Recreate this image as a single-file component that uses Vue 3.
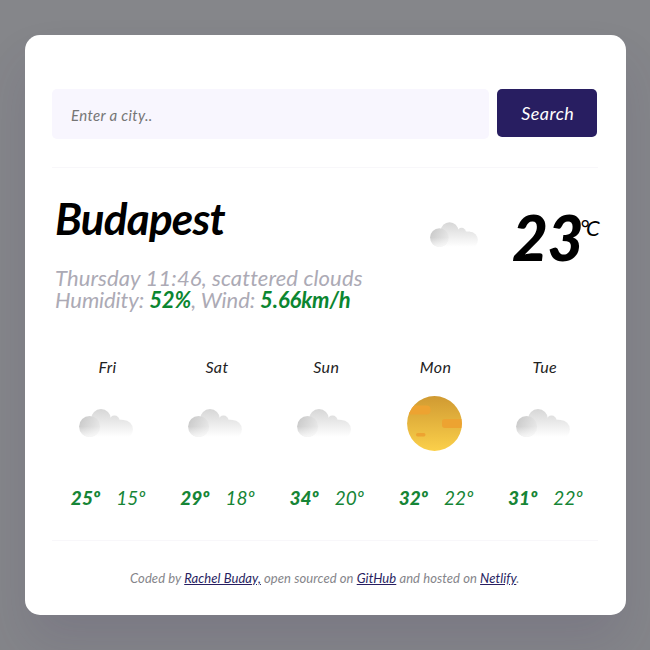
<script setup>
const days = [
  { name: 'Fri', icon: 'cloud', max: 25, min: 15 },
  { name: 'Sat', icon: 'cloud', max: 29, min: 18 },
  { name: 'Sun', icon: 'cloud', max: 34, min: 20 },
  { name: 'Mon', icon: 'sun', max: 32, min: 22 },
  { name: 'Tue', icon: 'cloud', max: 31, min: 22 },
]
</script>

<template>
  <div class="page">
    <svg class="defs" width="0" height="0" aria-hidden="true">
      <defs>
        <linearGradient id="back" gradientUnits="userSpaceOnUse" x1="0" y1="0" x2="0" y2="28">
          <stop offset="0" stop-color="#d6d6d6" />
          <stop offset="1" stop-color="#ffffff" />
        </linearGradient>
        <linearGradient id="front" x1="0" y1="0.2" x2="1" y2="0.7">
          <stop offset="0" stop-color="#c9c9c9" />
          <stop offset="1" stop-color="#ebebeb" />
        </linearGradient>
        <linearGradient id="fade" x1="0" y1="0" x2="0" y2="1">
          <stop offset="0.5" stop-color="#fff" stop-opacity="0" />
          <stop offset="1" stop-color="#fff" stop-opacity="0.75" />
        </linearGradient>
        <linearGradient id="sunny" x1="0" y1="0" x2="0" y2="1">
          <stop offset="0" stop-color="#d09a32" />
          <stop offset="1" stop-color="#fbd04a" />
        </linearGradient>
        <clipPath id="disc"><circle cx="27.5" cy="27.5" r="27.4" /></clipPath>
        <symbol id="cloud" viewBox="0 0 54 28">
          <g fill="url(#back)">
            <circle cx="22" cy="10" r="9.900" />
            <circle cx="35.500" cy="11.500" r="5" />
            <circle cx="44.500" cy="20.300" r="9.400" />
            <path d="M10 28V15L14 10H34L45 10.900V28Z" />
          </g>
          <circle cx="10.600" cy="17.500" r="10.500" fill="url(#front)" />
          <circle cx="10.600" cy="17.500" r="10.500" fill="url(#fade)" />
        </symbol>
        <symbol id="sun" viewBox="0 0 55 55">
          <circle cx="27.500" cy="27.500" r="27.400" fill="url(#sunny)" />
          <g clip-path="url(#disc)" fill="#eda331">
            <rect x="0" y="9.500" width="23.500" height="9" rx="4" />
            <rect x="35" y="23" width="24" height="9" rx="3" />
            <rect x="9" y="37" width="9.500" height="3.500" rx="1.700" />
          </g>
        </symbol>
      </defs>
    </svg>

    <main class="card">
      <form class="search" @submit.prevent>
        <input type="text" placeholder="Enter a city.." />
        <button type="submit">Search</button>
      </form>

      <section class="current">
        <div class="summary">
          <h1>Budapest</h1>
          <p class="line when">Thursday 11:46, scattered clouds</p>
          <p class="line air">Humidity: <b>52%</b>, Wind: <b>5.66km/h</b></p>
        </div>
        <svg class="now-icon"><use href="#cloud" /></svg>
        <div class="temp"><span class="value">23</span><span class="unit">°C</span></div>
      </section>

      <section class="forecast">
        <div v-for="d in days" :key="d.name" class="day">
          <span class="name">{{ d.name }}</span>
          <div class="picture">
            <svg :class="d.icon"><use :href="'#' + d.icon" /></svg>
          </div>
          <div class="range"><b>{{ d.max }}º</b><span>{{ d.min }}º</span></div>
        </div>
      </section>

      <footer>
        <span>Coded by <a href="#">Rachel Buday,</a> open sourced on <a href="#">GitHub</a> and hosted on <a href="#">Netlify</a>.</span>
      </footer>
    </main>
  </div>
</template>

<style>
body { background: #85868a; overflow: hidden; }
</style>

<style scoped>
.page {
  box-sizing: border-box;
  height: 650px;
  padding: 35px 24.5px;
  font-family: Lato, sans-serif;
  font-style: italic;
  overflow: hidden;
}
.defs { position: absolute; }
.card {
  box-sizing: border-box;
  height: 580px;
  padding: 54.4px 28px 0 27.5px;
  border-radius: 15px;
  background: #fff;
  box-shadow: 0 30px 50px rgba(65, 50, 100, 0.14);
}
.search {
  box-sizing: border-box;
  display: flex;
  align-items: flex-start;
  gap: 8px;
  height: 78.6px;
  border-bottom: 1px solid #f8f7fa;
}
input, button { font: inherit; border: 0; border-radius: 5px; box-sizing: border-box; }
input {
  width: 437px;
  height: 49.6px;
  padding: 1px 18px 0 19px;
  background: #f8f6fe;
  font-size: 15px;
  letter-spacing: 0.35px;
}
input::placeholder { color: #757575; opacity: 1; }
button {
  flex: none;
  width: 99.5px;
  height: 47.5px;
  padding: 0 0 0 2px;
  background: #281e61;
  color: #fff;
  font-size: 18px;
  letter-spacing: 0.4px;
}
.current { display: flex; height: 182px; }
h1, p { margin: 0; white-space: nowrap; }
.summary { box-sizing: border-box; flex: none; width: 378px; padding: 23px 0 0 3px; }
h1 {
  height: 76px;
  font-size: 44px;
  font-weight: 700;
  line-height: 54px;
  letter-spacing: -0.8px;
}
.line { height: 22px; font-size: 22px; line-height: 22px; color: #acaab5; }
.when { letter-spacing: 0.12px; }
.air { letter-spacing: -0.1px; }
.line b { color: #0b8630; font-weight: 700; }
.now-icon { flex: none; width: 48px; height: 25px; margin-top: 54px; }
.temp { display: flex; align-items: flex-start; margin-left: 34px; padding-top: 34px; }
.value { font-size: 62px; line-height: 70px; font-weight: 900; letter-spacing: -0.5px; }
.unit { font-size: 22px; line-height: 26px; padding-top: 13px; margin-left: -3px; letter-spacing: -3px; }
.forecast {
  box-sizing: border-box;
  display: grid;
  grid-template-columns: repeat(5, 109.3px);
  height: 191px;
  border-bottom: 1px solid #f8f7fa;
}
.day { display: flex; flex-direction: column; align-items: center; padding-top: 7px; }
.name { font-size: 16px; line-height: 20px; color: #222; letter-spacing: 0.4px; padding-left: 2px; }
.picture { display: flex; justify-content: center; height: 73px; padding-top: 19px; }
.cloud { width: 54px; height: 28px; margin-top: 13px; margin-right: 2px; }
.sun { width: 55px; height: 55px; }
.range {
  display: flex;
  gap: 16px;
  padding: 17px 0 0 3px;
  font-size: 19px;
  line-height: 24px;
  letter-spacing: 0.05px;
  color: #168536;
}
.range b { font-weight: 900; }
footer { padding-top: 27px; text-align: center; font-size: 13px; letter-spacing: 0.08px; line-height: 20px; color: #85858a; white-space: nowrap; }
a { color: #281e61; }
</style>
